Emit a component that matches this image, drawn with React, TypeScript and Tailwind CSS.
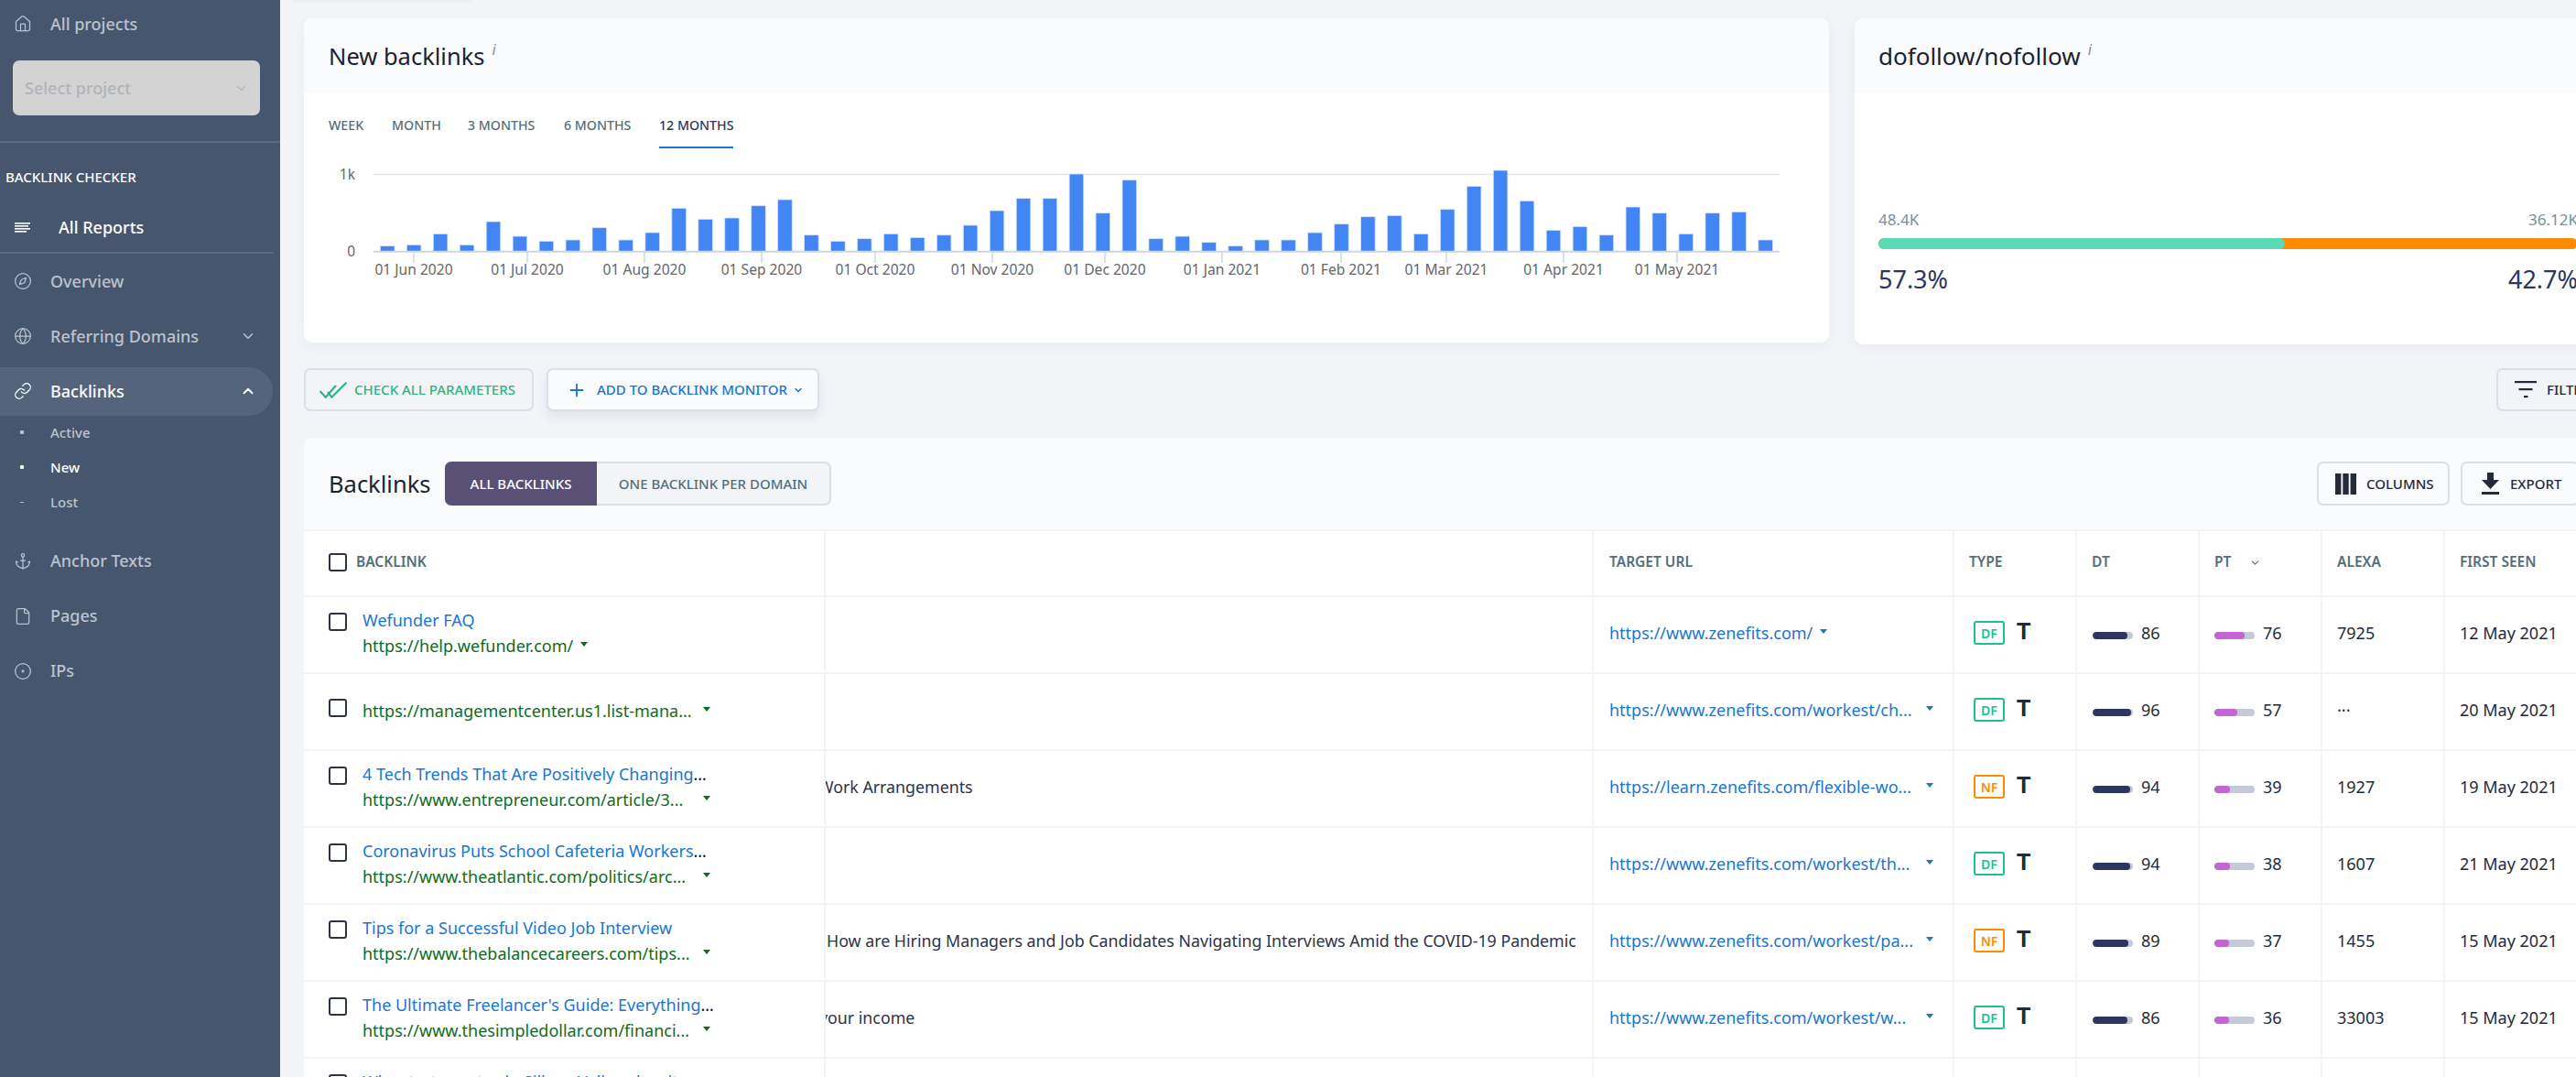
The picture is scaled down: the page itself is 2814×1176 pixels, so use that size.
import React from 'react';
import { House, Compass, Globe, Link, Anchor, File, CircleDot, ChevronDown, ChevronUp, Plus } from 'lucide-react';

const barTops = [806,802,766,802,726,774,790,786,746,786,762,682,718,714,674,654,770,790,782,766,778,770,738,690,650,650,570,698,590,782,774,794,806,786,786,762,734,710,706,766,686,610,558,658,754,742,770,678,698,766,698,694,786];
const ticks: [number, string][] = [[452,'01 Jun 2020'],[576,'01 Jul 2020'],[704,'01 Aug 2020'],[832,'01 Sep 2020'],[956,'01 Oct 2020'],[1084,'01 Nov 2020'],[1207,'01 Dec 2020'],[1335,'01 Jan 2021'],[1465,'01 Feb 2021'],[1580,'01 Mar 2021'],[1708,'01 Apr 2021'],[1832,'01 May 2021']];

function Caret({ className }: { className: string }) {
  return (
    <svg viewBox="0 0 10 6" className={className} fill="currentColor"><path d="M0 0h10L5 6z" /></svg>
  );
}

function Checkbox() {
  return <span className="block w-[20px] h-[20px] shrink-0 border-2 border-[#2c3344] rounded-[3px] bg-white" />;
}

function NavItem({ icon, label, chevron, active }: { icon: React.ReactNode; label: string; chevron?: 'down' | 'up'; active?: boolean }) {
  return (
    <div className="h-[60px] flex items-center">
      <div className={`w-[298px] h-[53px] flex items-center pl-[15px] pr-[18px] rounded-r-[27px] ${active ? 'bg-[#54647c] text-white' : 'text-[#bcc3ce]'}`}>
        <span className="w-[40px] shrink-0">{icon}</span>
        <span className="text-[18px] font-medium">{label}</span>
        {chevron === 'down' && <ChevronDown className="ml-auto w-[18px] h-[18px]" strokeWidth={2} />}
        {chevron === 'up' && <ChevronUp className="ml-auto w-[18px] h-[18px]" strokeWidth={2.5} />}
      </div>
    </div>
  );
}

function SubItem({ label, active, dash }: { label: string; active?: boolean; dash?: boolean }) {
  return (
    <div className={`h-[38.3px] flex items-center pl-[22px] text-[15px] font-medium ${active ? 'text-white' : 'text-[#bcc3ce]'}`}>
      <span className={`w-[4px] ${dash ? 'h-[1.5px]' : 'h-[4px]'} rounded-[1px] mr-[29px] ${active ? 'bg-white' : 'bg-[#bcc3ce]'}`} />
      {label}
    </div>
  );
}

function Sidebar() {
  const ic = 'w-[20px] h-[20px]';
  return (
    <aside className="w-[306px] shrink-0 h-[1176px] bg-[#46566f] overflow-hidden">
      <div className="h-[52px] flex items-center pl-[15px] text-[#bcc3ce] text-[18px] font-medium">
        <House className={`${ic} mr-[20px]`} strokeWidth={1.5} />All projects
      </div>
      <div className="mt-[14px] mx-[14px] w-[270px] h-[60px] bg-[#d3d3d3] rounded-[7px] flex items-center pl-[13px] pr-[13px] text-[#b0b4bb] text-[18px] font-medium">
        Select project
        <ChevronDown className="ml-auto w-[15px] h-[15px]" strokeWidth={2} />
      </div>
      <div className="mt-[28px] h-[2px] bg-[#5c6b83]" />
      <div className="mt-[25px] h-[24px] leading-[24px] pl-[6px] text-white text-[15px] font-medium">BACKLINK CHECKER</div>
      <div className="mt-[16px] h-[54px] flex items-center pl-[16px] text-white text-[18px] font-medium">
        <svg viewBox="0 0 17 11" className="w-[17px] h-[11px] mr-[31px]" fill="currentColor">
          <rect width="17" height="1.6" /><rect y="3" width="15" height="1.6" /><rect y="6" width="17" height="1.6" /><rect y="9" width="13" height="1.6" />
        </svg>
        All Reports
      </div>
      <div className="w-[298px] h-[2px] bg-[#5c6b83]" />
      <NavItem icon={<Compass className={ic} strokeWidth={1.5} />} label="Overview" />
      <NavItem icon={<Globe className={ic} strokeWidth={1.5} />} label="Referring Domains" chevron="down" />
      <NavItem icon={<Link className={ic} strokeWidth={1.5} />} label="Backlinks" chevron="up" active />
      <div className="-mt-[4px]">
        <SubItem label="Active" />
        <SubItem label="New" active />
        <SubItem label="Lost" dash />
      </div>
      <div className="mt-[15px]">
        <NavItem icon={<Anchor className={ic} strokeWidth={1.5} />} label="Anchor Texts" />
        <NavItem icon={<File className={ic} strokeWidth={1.5} />} label="Pages" />
        <NavItem icon={<CircleDot className={ic} strokeWidth={1.5} />} label="IPs" />
      </div>
    </aside>
  );
}

function Chart() {
  return (
    <svg width="1666" height="190" className="block">
      <line x1="76" x2="1612" y1="20.5" y2="20.5" stroke="#e6e6e6" strokeWidth="1.5" />
      <text x="56" y="26" textAnchor="end" fontSize="15.5" fill="#666">1k</text>
      <text x="56" y="110" textAnchor="end" fontSize="15.5" fill="#666">0</text>
      {barTops.map((t, i) => (
        <rect key={i} x={83.4 + i * 28.95} y={t / 3 - 170} width="15.6" height={(824 - t) / 3} fill="#4285f4" stroke="#d5e3fb" strokeWidth="0.8" />
      ))}
      <line x1="76" x2="1612" y1="104.7" y2="104.7" stroke="#ccd6eb" strokeWidth="2" />
      {ticks.map(([x, l]) => (
        <g key={l}>
          <line x1={x - 332} x2={x - 332} y1="105" y2="117" stroke="#ccd6eb" strokeWidth="1.5" />
          <text x={x - 332} y="130" textAnchor="middle" fontSize="15.6" fill="#666">{l}</text>
        </g>
      ))}
    </svg>
  );
}

function Tabs() {
  const items = ['WEEK', 'MONTH', '3 MONTHS', '6 MONTHS'];
  return (
    <div className="flex h-[68px] pl-[27px] items-start">
      {items.map((t, i) => (
        <div key={t} className={`h-[60px] pt-[12px] pb-[2px] flex items-center text-[14.2px] font-medium text-[#546e7a] ${['w-[69px]', 'w-[83px]', 'w-[105px]', 'w-[104px]'][i]}`}>{t}</div>
      ))}
      <div className="h-[60px] pt-[12px] flex items-center text-[14.2px] font-medium text-[#2d3561] border-b-2 border-[#1976d2]">12 MONTHS</div>
    </div>
  );
}

function Btn({ children, className }: { children: React.ReactNode; className: string }) {
  return <div className={`flex items-center border-2 border-[#dcdfe8] rounded-[7px] text-[15px] font-medium ${className}`}>{children}</div>;
}

type Row = { title?: string; url: string; anchor?: string; shift?: string; target: string; type: 'DF' | 'NF'; dt: number; pt: number; alexa: string; date: string };
const rows: Row[] = [
  { title: 'Wefunder FAQ', url: 'https://help.wefunder.com/', target: 'https://www.zenefits.com/', type: 'DF', dt: 86, pt: 76, alexa: '7925', date: '12 May 2021' },
  { url: 'https://managementcenter.us1.list-mana...', target: 'https://www.zenefits.com/workest/ch...', type: 'DF', dt: 96, pt: 57, alexa: '···', date: '20 May 2021' },
  { title: '4 Tech Trends That Are Positively Changing Flexible Work', url: 'https://www.entrepreneur.com/article/3...', anchor: 'Work Arrangements', shift: '-ml-[9px]', target: 'https://learn.zenefits.com/flexible-wo...', type: 'NF', dt: 94, pt: 39, alexa: '1927', date: '19 May 2021' },
  { title: 'Coronavirus Puts School Cafeteria Workers Fighting on the Front', url: 'https://www.theatlantic.com/politics/arc...', target: 'https://www.zenefits.com/workest/th...', type: 'DF', dt: 94, pt: 38, alexa: '1607', date: '21 May 2021' },
  { title: 'Tips for a Successful Video Job Interview', url: 'https://www.thebalancecareers.com/tips...', anchor: 'How are Hiring Managers and Job Candidates Navigating Interviews Amid the COVID-19 Pandemic', target: 'https://www.zenefits.com/workest/pa...', type: 'NF', dt: 89, pt: 37, alexa: '1455', date: '15 May 2021' },
  { title: "The Ultimate Freelancer's Guide: Everything You Need to Know", url: 'https://www.thesimpledollar.com/financi...', anchor: 'your income', shift: '-ml-[8px]', target: 'https://www.zenefits.com/workest/w...', type: 'DF', dt: 86, pt: 36, alexa: '33003', date: '15 May 2021' },
  { title: 'Why startups stay in Silicon Valley, despite the high costs', url: 'https://www.example.com/', target: 'https://www.zenefits.com/', type: 'DF', dt: 85, pt: 35, alexa: '2210', date: '14 May 2021' },
];

const cols = 'grid grid-cols-[570px_839px_394px_134px_134px_134px_134px_200px]';
const cell = 'border-r-2 border-[#f2f4f8] flex items-center min-w-0 pl-[16px]';

function Meter({ v, color }: { v: number; color: string }) {
  return (
    <span className="block w-[44px] h-[8px] mt-[5px] rounded-full bg-[#c5c9d8] overflow-hidden shrink-0">
      <span className={`block h-full rounded-full ${color}`} style={{ width: `${v}%` }} />
    </span>
  );
}

function TRow({ r }: { r: Row }) {
  return (
    <div className={`${cols} h-[84px] border-b-2 border-[#f2f4f8] text-[18px] text-[#242a3a]`}>
      <div className="border-r-2 border-[#f2f4f8] flex pl-[27px] relative">
        <div className={r.title ? 'pt-[17px]' : 'pt-[27px]'}><Checkbox /></div>
        <div className={`ml-[17px] ${r.title ? 'pt-[11px]' : 'pt-[26px]'} min-w-0`}>
          {r.title && (
            <div className="w-[385px] h-[28px] leading-[28px] line-clamp-1 text-[#111]"><span className="text-[#1976d2]">{r.title}</span></div>
          )}
          <div className="flex items-center h-[28px] text-[#0e6b22]">
            <span className={`${r.url.length > 30 ? 'w-[360px]' : ''} truncate`}>{r.url}</span>
            <Caret className={`w-[8px] h-[5px] -mt-[4px] shrink-0 ${r.url.length > 30 ? 'ml-[12px]' : 'ml-[8px]'}`} />
          </div>
        </div>
      </div>
      <div className="border-r-2 border-[#f2f4f8] flex items-center overflow-hidden pl-[1px] pb-[4px]">
        {r.anchor && <span className={`whitespace-nowrap text-[17.8px] text-[#2d3348] ${r.shift ?? ''}`}>{r.anchor}</span>}
      </div>
      <div className={`${cell} pl-[17px] pb-[4px] text-[#1976d2]`}>
        <span className={`${r.target.length > 30 ? 'w-[338px]' : ''} truncate`}>{r.target}</span>
        <Caret className="w-[8px] h-[5px] -mt-[4px] ml-[8px] shrink-0" />
      </div>
      <div className={`${cell} pl-[21px] pb-[4px]`}>
        <span className={`w-[34px] h-[26px] flex items-center justify-center border-2 rounded-[3px] text-[14px] font-semibold ${r.type === 'DF' ? 'border-[#1fc08a] text-[#1fc08a]' : 'border-[#ff8c00] text-[#ff8c00]'}`}>{r.type}</span>
        <span className="ml-[13px] text-[25px] leading-none font-black text-[#242936] [font-family:'Liberation_Sans',sans-serif] -mt-[3px]">T</span>
      </div>
      <div className={`${cell} pl-[17px] pb-[4px]`}>
        <Meter v={r.dt} color="bg-[#2d3561]" />
        <span className="ml-[9px]">{r.dt}</span>
      </div>
      <div className={`${cell} pl-[16px] pb-[4px]`}>
        <Meter v={r.pt} color="bg-[#c264d1]" />
        <span className="ml-[9px]">{r.pt}</span>
      </div>
      <div className={`${cell} pb-[4px]`}>{r.alexa}</div>
      <div className={`${cell} pb-[4px]`}>{r.date}</div>
    </div>
  );
}

export default function App() {
  const hd = 'text-[15.5px] font-semibold text-[#546e7a]';
  return (
    <div className="w-[2814px] h-[1176px] overflow-hidden flex bg-[#f2f4f8] [font-family:'Noto_Sans',sans-serif]">
      <Sidebar />
      <main className="flex-1 min-w-0 pl-[26px]">
        <div className="h-[1px] w-[195px] -ml-[12px] bg-[#eceef3] shadow-sm" />
        <div className="flex gap-[28px] mt-[19px] items-start w-[2510px]">
          <section className="w-[1666px] h-[354px] shrink-0 bg-white rounded-[9px] shadow-[0_4px_14px_rgba(60,70,110,0.05)] overflow-hidden">
            <div className="h-[82px] bg-[#fafbfd] pl-[27px] flex items-center text-[25.5px] text-[#1d2230]">
              New backlinks<span className="ml-[8px] -mt-[14px] text-[16px] italic text-[#78909c]">i</span>
            </div>
            <Tabs />
            <Chart />
          </section>
          <section className="w-[816px] h-[356px] shrink-0 bg-white rounded-[9px] shadow-[0_4px_14px_rgba(60,70,110,0.05)] overflow-hidden">
            <div className="h-[82px] bg-[#fafbfd] pl-[26px] flex items-center text-[26px] text-[#1d2230]">
              dofollow/nofollow<span className="ml-[8px] -mt-[14px] text-[16px] italic text-[#78909c]">i</span>
            </div>
            <div className="px-[26px] pt-[127px]">
              <div className="flex justify-between text-[17px] leading-[22px] text-[#78909c]"><span>48.4K</span><span>36.12K</span></div>
              <div className="mt-[9px] h-[12px] flex bg-[#ff8c00] rounded-[6px]"><div className="w-[444px] bg-[#5adbb5] rounded-[6px]" /></div>
              <div className="mt-[17px] flex justify-between text-[27px] leading-[32px] text-[#2d3561]"><span>57.3%</span><span>42.7%</span></div>
            </div>
          </section>
        </div>

        <div className="mt-[26px] flex items-center w-[2515px] h-[47px]">
          <Btn className="w-[251px] h-full pl-[15px] text-[#2fb583]">
            <svg viewBox="0 0 30 18" className="w-[30px] h-[18px] mr-[8px]" fill="none" stroke="#2fb583" strokeWidth="2.2"><path d="M0.500 10 L6.700 16.700 L18 4 M9 11 L13.400 16.700 L29.500 0.700" /></svg>
            CHECK ALL PARAMETERS
          </Btn>
          <Btn className="ml-[14px] w-[298px] h-full pl-[20px] bg-[#fafbfd] text-[#1976d2] shadow-[0_6px_12px_rgba(60,70,110,0.09)]">
            <Plus className="w-[22px] h-[22px] mr-[11px]" strokeWidth={2} />
            ADD TO BACKLINK MONITOR
            <ChevronDown className="ml-[6px] w-[12px] h-[12px]" strokeWidth={3} />
          </Btn>
          <Btn className="ml-auto w-[120px] h-full pl-[18px] text-[#242a3a]">
            <svg viewBox="0 0 24 20" className="w-[24px] h-[20px] mr-[11px]" fill="currentColor"><rect width="24" height="2.2" /><rect x="4.500" y="8" width="15" height="2.2" /><rect x="10" y="16" width="4.500" height="2.2" /></svg>
            FILTER
          </Btn>
        </div>

        <section className="mt-[29px] w-[2510px] bg-white rounded-t-[9px] overflow-hidden">
          <div className="h-[102px] bg-[#fafbfd] flex items-center pl-[27px] pr-[24px] border-b-2 border-[#f2f4f8]">
            <span className="text-[25.5px] text-[#1d2230] w-[127px]">Backlinks</span>
            <div className="flex h-[48px] text-[15px] font-medium">
              <div className="w-[166px] bg-[#5a5075] text-white rounded-l-[7px] flex items-center justify-center">ALL BACKLINKS</div>
              <div className="w-[256px] bg-[#f2f4f8] text-[#546e7a] border-2 border-l-0 border-[#dcdfe8] rounded-r-[7px] flex items-center justify-center">ONE BACKLINK PER DOMAIN</div>
            </div>
            <Btn className="ml-auto w-[145px] h-[48px] pl-[18px] text-[#242a3a]">
              <svg viewBox="0 0 23 23" className="w-[23px] h-[23px] mr-[11px]" fill="currentColor"><rect width="6.4" height="23" /><rect x="8.3" width="6.4" height="23" /><rect x="16.6" width="6.4" height="23" /></svg>
              COLUMNS
            </Btn>
            <Btn className="ml-[12px] w-[130px] h-[48px] pl-[21px] text-[#242a3a]">
              <svg viewBox="0 0 19 24" className="w-[19px] h-[24px] mr-[12px]" fill="currentColor"><path d="M6 0h7v8h6l-9.500 10L0 8h6z" /><rect y="21" width="19" height="3" /></svg>
              EXPORT
            </Btn>
          </div>
          <div className={`${cols} h-[72px] border-b-2 border-[#f2f4f8]`}>
            <div className="border-r-2 border-[#f2f4f8] flex items-center pl-[27px] pb-[2px]">
              <Checkbox /><span className={`${hd} ml-[10px]`}>BACKLINK</span>
            </div>
            <div className="border-r-2 border-[#f2f4f8]" />
            <div className={`${cell} ${hd} pl-[17px] pb-[2px]`}>TARGET URL</div>
            <div className={`${cell} ${hd} pb-[2px]`}>TYPE</div>
            <div className={`${cell} ${hd} pb-[2px]`}>DT</div>
            <div className={`${cell} ${hd} pb-[2px]`}>PT<ChevronDown className="ml-[20px] w-[13px] h-[13px]" strokeWidth={2} /></div>
            <div className={`${cell} ${hd} pb-[2px]`}>ALEXA</div>
            <div className={`${cell} ${hd} pb-[2px]`}>FIRST SEEN</div>
          </div>
          {rows.map((r, i) => <TRow key={i} r={r} />)}
        </section>
      </main>
    </div>
  );
}
